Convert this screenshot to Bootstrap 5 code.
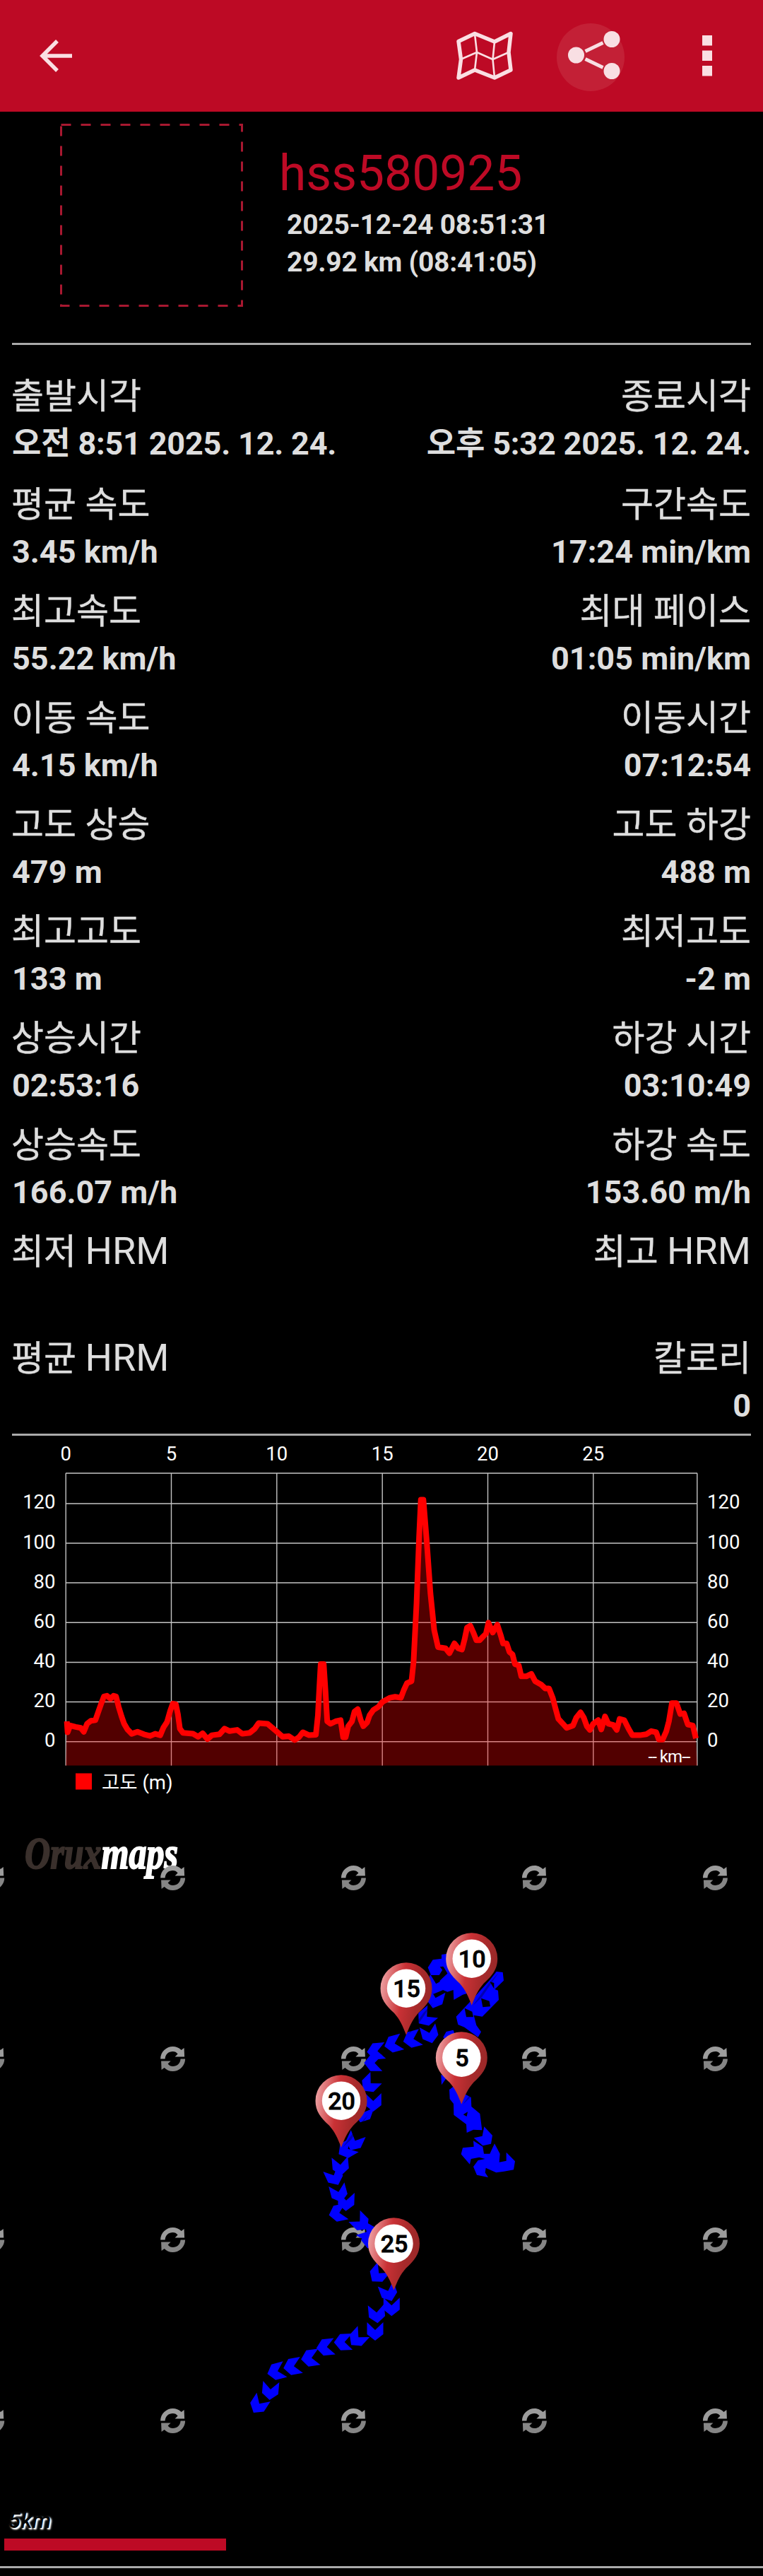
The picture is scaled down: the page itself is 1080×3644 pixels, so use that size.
<!DOCTYPE html>
<html lang="ko">
<head>
<meta charset="utf-8">
<title>OruxMaps</title>
<link href="https://cdn.jsdelivr.net/npm/bootstrap@5.3.0/dist/css/bootstrap.min.css" rel="stylesheet">
<style>
body{background:#000;color:#dedede;font-family:Roboto,"Noto Sans CJK KR",sans-serif;width:1080px;overflow-x:hidden}
.topbar{height:158px;background:#bd0a25;padding:0 72px 0 56px}
.share-btn{width:96px;height:96px;border-radius:50%;background:#c32036;margin:4px 110px 0 62px}
.profile{height:327px;padding:17px 0 0 85px}
.profile-text{padding:31px 0 0 62px}
.user-name{font-size:69.5px;line-height:80px;color:#bd0a25;margin:0 0 6px -11px}
.user-info{font-size:39px;line-height:53px;font-weight:700;letter-spacing:-.25px}
.rule{height:3px;background:#aaa}
.rule-inset{margin:0 17px}
.stats{height:1540px;padding:33px 17px 0}
.stat-row{height:151px}
.stat-row:first-child{height:153px}
.stat-name{font-size:50px;line-height:80px;-webkit-text-stroke:.4px #dedede}
.stat-name .latin{font-size:54px;line-height:1;-webkit-text-stroke:0}
.text-start .stat-name{margin-left:-1px}
.stat-num{font-size:45px;line-height:54px;font-weight:700}
.stat-date{letter-spacing:-.2px}
svg{display:block}
svg text{font-family:Roboto,"Noto Sans CJK KR",sans-serif}
.logo-word text{font-family:"Liberation Serif",serif;font-weight:700;font-style:italic}
.scale-label{text-shadow:2px 2px 1.5px #fff,2px 2px 3px #ddd}
</style>
<script src="https://cdn.jsdelivr.net/npm/bootstrap@5.3.0/dist/js/bootstrap.bundle.min.js"></script>
</head>
<body>
<header class="topbar d-flex align-items-center justify-content-between">
  <svg width="46" height="46" viewBox="0 0 46 46" fill="none" stroke="#fadfe3" stroke-width="5.5"><path d="M46 23H5M25 2L4 23L25 44"/></svg>
  <div class="d-flex align-items-center">
    <svg width="80" height="70" viewBox="645 43 80 70" fill="none" stroke="#fadfe3" stroke-linejoin="round"><path stroke-width="5.500" d="M648 57.500L671 46.500L699 58L722 46.500L719 73L722 98L699 109L671 98L648 109L651.500 83Z"/><path stroke-width="2.600" d="M671 47L674 73L671 98M699 58L696.500 83L699 109M651 83L674 73L696.500 83L719 73"/></svg>
    <div class="share-btn"><svg width="96" height="96" viewBox="787.5 33 96 96"><path d="M828 72.500L853 60.500M828 83.500L853 95.500" fill="none" stroke="#f8dfe3" stroke-width="5"/><g fill="#f8dfe3"><circle cx="815" cy="78" r="11.500"/><circle cx="865.500" cy="55.500" r="11.500"/><circle cx="865.500" cy="100.500" r="11.500"/></g></svg></div>
    <svg width="14" height="58" viewBox="0 0 14 58" fill="#fadfe3"><path d="M0 0h14v14.500h-14zM0 21.500h14v14.500h-14zM0 43h14v14.500h-14z"/></svg>
  </div>
</header>
<section class="profile d-flex">
  <svg width="259" height="259"><rect x="1.500" y="1.500" width="256" height="256" fill="none" stroke="#a81830" stroke-width="3" stroke-dasharray="14 14"/></svg>
  <div class="profile-text"><div class="user-name">hss580925</div><div class="user-info">2025-12-24 08:51:31</div><div class="user-info">29.92 km (08:41:05)</div></div>
</section>
<div class="rule rule-inset"></div>
<section class="stats" id="stats"></section>
<div class="rule rule-inset"></div>
<svg id="chart" width="1080" height="529" viewBox="0 2031 1080 529"></svg>
<svg id="map" width="1080" height="1070" viewBox="0 2560 1080 1070"></svg>
<div class="rule"></div>
<script>
const rows=[["출발시각","오전 8:51 2025. 12. 24.","종료시각","오후 5:32 2025. 12. 24."],["평균 속도","3.45 km/h","구간속도","17:24 min/km"],["최고속도","55.22 km/h","최대 페이스","01:05 min/km"],["이동 속도","4.15 km/h","이동시간","07:12:54"],["고도 상승","479 m","고도 하강","488 m"],["최고고도","133 m","최저고도","-2 m"],["상승시간","02:53:16","하강 시간","03:10:49"],["상승속도","166.07 m/h","하강 속도","153.60 m/h"],["최저 HRM","","최고 HRM",""],["평균 HRM","","칼로리","0"]];
const cell=(n,v,c)=>`<div class="${c}"><div class="stat-name">${n.replace('HRM','<span class="latin">HRM</span>')}</div><div class="stat-num${v.length>15?' stat-date':''}">${v}</div></div>`;
document.getElementById('stats').innerHTML=rows.map(r=>`<div class="stat-row d-flex justify-content-between">${cell(r[0],r[1],'text-start')}${cell(r[2],r[3],'text-end')}</div>`).join('');

/* elevation chart */
let g='<g stroke="#c4c4c4" stroke-width="1.400">';
const xs=[93.2,242.5,391.8,541.2,690.5,839.8,986.8];
xs.forEach(x=>g+=`<path d="M${x} 2084V2497.500"/>`);
[2084,2127,2183,2239,2295.3,2351.5,2407.5,2463.700].forEach(y=>g+=`<path d="M93 ${y}H987"/>`);
g+='</g>';
const line="265,1205 268,1250 278,1222 300,1228 320,1232 332,1248 345,1215 360,1203 378,1200 390,1165 400,1135 412,1103 424,1100 438,1112 450,1100 460,1103 470,1145 482,1185 492,1215 505,1238 522,1256 545,1248 570,1258 595,1265 615,1256 635,1262 648,1230 662,1208 675,1160 685,1132 697,1135 705,1175 713,1235 725,1252 765,1256 785,1268 803,1254 822,1278 840,1262 870,1258 890,1235 910,1245 940,1240 960,1256 990,1252 1010,1235 1025,1212 1060,1215 1080,1232 1100,1250 1120,1268 1145,1266 1168,1282 1185,1270 1200,1250 1225,1262 1252,1260 1260,1180 1265,1080 1271,970 1283,970 1290,1080 1297,1205 1310,1215 1330,1205 1350,1200 1360,1270 1370,1270 1380,1225 1395,1205 1405,1165 1418,1155 1430,1200 1440,1225 1455,1210 1465,1180 1480,1158 1500,1145 1516,1125 1546,1108 1566,1104 1589,1108 1601,1075 1613,1048 1631,1040 1639,960 1651,720 1661,450 1668,295 1678,295 1691,460 1706,680 1721,830 1736,900 1766,905 1781,925 1801,885 1816,905 1831,910 1841,870 1851,820 1864,812 1876,840 1888,872 1901,872 1916,855 1926,845 1936,800 1953,840 1971,808 1984,850 1994,885 2008,885 2019,920 2031,930 2041,970 2056,975 2066,1020 2086,1020 2106,1010 2121,1040 2146,1055 2161,1070 2176,1070 2191,1110 2201,1150 2213,1195 2231,1215 2246,1232 2271,1222 2284,1190 2301,1168 2314,1190 2326,1225 2338,1240 2351,1215 2371,1200 2383,1238 2398,1185 2411,1215 2431,1220 2444,1240 2456,1195 2474,1200 2491,1235 2506,1262 2536,1262 2561,1258 2581,1245 2601,1250 2611,1280 2626,1280 2641,1245 2651,1205 2663,1130 2681,1130 2696,1175 2711,1172 2726,1218 2746,1222 2758,1275";
const pts=line.split(' ').map(p=>p.split(',')).map(([x,y])=>(x/2.8).toFixed(1)+','+(2020+y*.3444).toFixed(1)).join(' ');
g+=`<polygon points="93,2497.500 ${pts} 987,2497.500" fill="#f00" fill-opacity=".32"/><polyline points="${pts}" fill="none" stroke="#f00" stroke-width="8" stroke-linejoin="round"/><g fill="#fff" font-size="27.500">`;
[0,5,10,15,20,25].forEach((v,i)=>g+=`<text x="${xs[i]}" y="2065.700" text-anchor="middle">${v}</text>`);
[0,20,40,60,80,100,120].forEach(v=>{const y=2471-v*2.805;g+=`<text x="78.500" y="${y}" text-anchor="end">${v}</text><text x="1001" y="${y}">${v}</text>`});
g+='<text x="144" y="2530.500">고도 (m)</text><text x="917.500" y="2492.500" font-size="24" textLength="60">-- km--</text></g><rect x="107" y="2508.500" width="23" height="23" fill="#f00"/>';
document.getElementById('chart').innerHTML=g;

/* map canvas */
let m=`<defs><linearGradient id="pin" x1="0" y1=".3" x2="1" y2=".5"><stop offset="0" stop-color="#eda0a2"/><stop offset=".42" stop-color="#c93135"/><stop offset=".72" stop-color="#a82a2b"/><stop offset="1" stop-color="#982828"/></linearGradient>
<linearGradient id="gr" x1="0" y1="-16" x2="0" y2="16" gradientUnits="userSpaceOnUse"><stop offset="0" stop-color="#a2a2a2"/><stop offset="1" stop-color="#7d7d7d"/></linearGradient>
<path id="half" d="M-17.500 0C-17.500-10-9-17.500 0-17.500C5-17.500 9-15.500 12-12.500L16-15.500L16.500-3L3-3L7-7C5-9.500 3-10.500 0-10.500C-6-10.500-10.500-6.500-11 0Z"/></defs>
<g class="logo-word" font-size="63"><text x="35" y="2643" textLength="217" lengthAdjust="spacingAndGlyphs" stroke-width="2"><tspan fill="#3a302c" stroke="#3a302c">Orux</tspan><tspan fill="#fff" stroke="#fff">maps</tspan></text></g>`;
for(const y of [2656.5,2912.5,3168.5,3424.5])for(const x of [-11.3,244.6,500.4,756.4,1012.4])m+=`<g transform="translate(${x} ${y})"><use href="#half" fill="#9c9c9c"/><use href="#half" fill="#858585" transform="rotate(180)"/></g>`;
const A=[[633,654,0],[703,550,0],[640,580,-5],[690,488,-20],[645,412,40],[558,683,43],[497,699,88],[422,721,84],[357,767,82],[282,803,80],[213,824,75],[188,906,5],[138,966,33],[479,68,-15],[510,104,2],[475,152,78],[572,192,-45],[602,235,-60],[612,266,90],[460,-3,-25]].map(([x,y,a])=>[320+x/3,3080+y/3,a]).concat(
[[186,1093,-5],[212,1022,60],[245,990,25],[283,870,20],[325,822,0],[310,745,45],[325,655,90],[337,605,85],[410,574,75],[490,554,75],[565,533,-15],[548,462,50],[588,385,15],[590,325,15]].map(([x,y,a])=>[420+x/3,2700+y/3,a]));
m+='<g fill="#00f">'+A.map(([x,y,a])=>`<path transform="translate(${x.toFixed(1)} ${y.toFixed(1)}) rotate(${a})" d="M-11.500-13L0-2L11.500-13V4L0 13L-11.500 4Z"/>`).join('');
m+='<g transform="translate(420 2700) scale(.33333)"><path d="M557 250L578 217L615 212V195L635 192L720 300L722 360L705 365L667 387L665 345L640 353L605 338L608 305L640 275L625 250L605 282H570Z"/><path d="M820 303L848 267L875 270L879 305L841 342L855 347L858 387L788 458L752 452L763 495L783 523L770 545L712 503L685 492L677 458L750 380Z"/><path d="M622 545L635 522L665 515L680 560L640 570ZM613 705L638 715L615 748ZM648 768L665 755L700 780L740 800L742 840L778 870L787 940L750 938L722 951L720 915L667 875L666 828L650 808Z"/><path d="M796 925L831 962L825 998L790 1006L752 973L788 965ZM698 1042L705 1015L752 1010L750 985L790 1010L795 1040L820 1040L840 997L863 1040L860 1076L890 1070V1034L927 1072L921 1108L880 1115L847 1120L803 1100L800 1120L813 1140L765 1130L750 1095L770 1068L800 1062L775 1055L740 1062L735 1085Z"/><path fill="#000" d="M608 247L622 245L638 272L630 275ZM783 380L818 392L822 415L790 418ZM713 422L745 437L750 460L720 460ZM820 310L838 315L838 340ZM707 874L726 862L722 882Z"/></g></g>';
for(const [x,y,n] of [[575,2812.7,15],[667.7,2770.7,10],[483,2971.7,20],[653.3,2910.7,5],[557.5,3173.7,25]])m+=`<g transform="translate(${x} ${y})"><path d="M2 66L14 55L38 20L24 35Z" fill="#000" opacity=".3"/><path d="M0 66C-5 53-9 44-17 35C-29 24-36.500 15-36.500 0A36.500 36.500 0 0 1 36.500 0C36.500 15 29 24 17 35C9 44 5 53 0 66Z" fill="url(#pin)"/><circle r="27.200" fill="#fff"/><text x="0.500" y="12" text-anchor="middle" font-size="34" font-weight="500" fill="#000" stroke="#000" stroke-width=".8">${n}</text></g>`;
m+='<text class="scale-label" x="11.500" y="3576" font-size="32" font-weight="500" font-style="italic" fill="#050505">5km</text><rect x="6" y="3591" width="314" height="17" fill="#bd0a25"/>';
document.getElementById('map').innerHTML=m;
</script>
</body>
</html>
